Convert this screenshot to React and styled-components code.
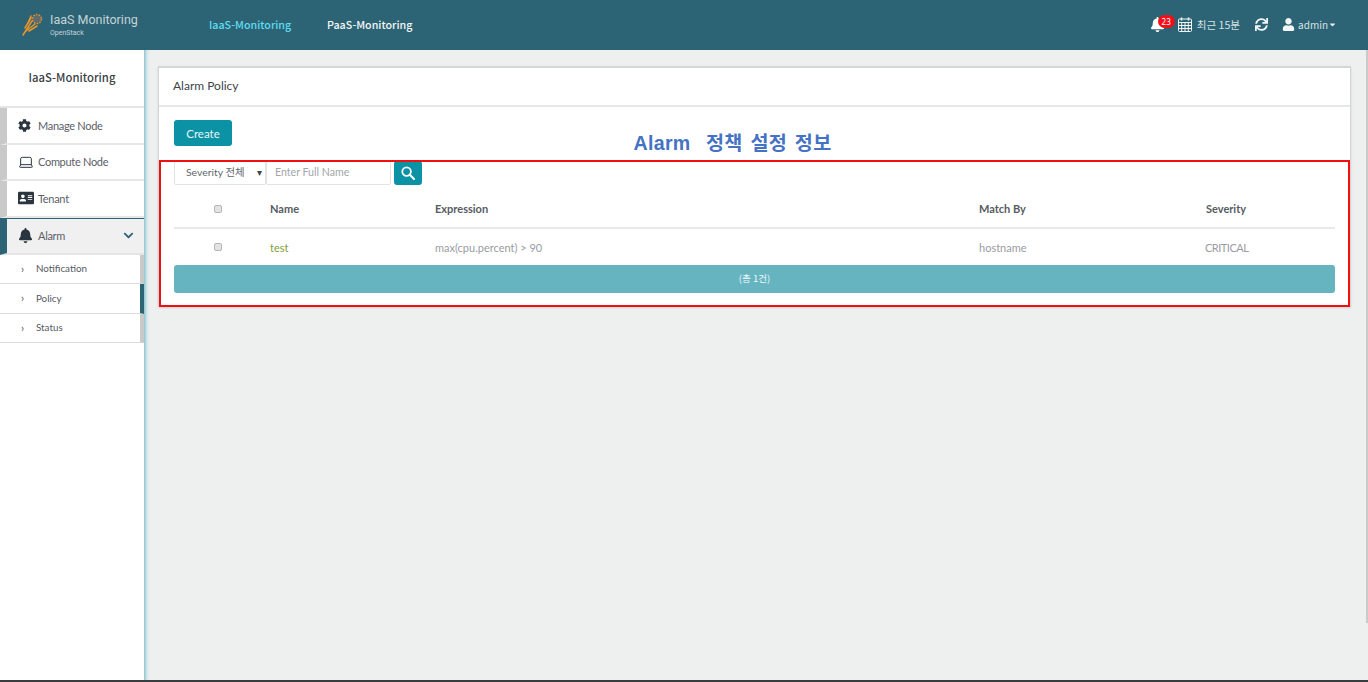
import React from "react";
import styled, { createGlobalStyle } from "styled-components";
import { FaCog, FaBell, FaChevronDown, FaAddressCard, FaSync, FaUser, FaCaretDown } from "react-icons/fa";
import { Laptop } from "lucide-react";

const KR_FONT = `"Noto Sans CJK KR", "Noto Sans", sans-serif`;
const BODY_FONT = `Lato, "Noto Sans CJK KR", sans-serif`;
const TEAL = "#2c6476";
const BUTTON = "#0b92a5";

const GlobalStyle = createGlobalStyle`
    html, body {
        margin: 0;
        padding: 0;
        height: 100%;
        overflow: hidden;
        background: #eef0ef;
    }
    * {
        box-sizing: border-box;
    }
`;

const Page = styled.div`
    position: relative;
    height: 100vh;
    display: flex;
    flex-flow: column;
    font-family: ${BODY_FONT};
`;

const Header = styled.header`
    height: 50px;
    flex: none;
    background: ${TEAL};
    display: flex;
    align-items: center;
    padding: 0 31px 2px 22px;
`;

const Brand = styled.div`
    width: 187px;
    display: flex;
    align-items: center;
    gap: 4px;
`;

const BrandText = styled.div`
    display: flex;
    flex-flow: column;
    color: #c5d3d7;
    font-family: Roboto, sans-serif;
    font-size: 12.5px;
    line-height: 15px;
    margin-top: 2px;
    small {
        font-size: 7px;
        line-height: 9px;
        margin-top: 2px;
    }
`;

const TopLink = styled.a`
    font-family: ${KR_FONT};
    font-size: 10.7px;
    font-weight: 500;
    color: ${(p) => (p.$active ? "#5fdcf0" : "#f4f7f7")};
    width: ${(p) => p.$width}px;
`;

const HeaderRight = styled.div`
    margin-left: auto;
    display: flex;
    align-items: center;
    color: #e6eef0;
    font-size: 12px;
`;

const BellWrap = styled.span`
    position: relative;
    display: inline-flex;
    width: 28px;
    font-size: 15px;
    color: #fff;
`;

const Badge = styled.span`
    position: absolute;
    left: 8px;
    top: -2px;
    width: 17px;
    height: 13px;
    border-radius: 7px;
    background: #f0101a;
    color: #fff;
    font-size: 8px;
    line-height: 13px;
    text-align: center;
    font-family: "Noto Sans", sans-serif;
`;

const Range = styled.span`
    font-family: ${KR_FONT};
    font-size: 10.6px;
    margin-left: 5px;
    margin-right: 15px;
    color: #d7e2e5;
`;

const Gap = styled.span`
    width: 14px;
`;

const UserName = styled.span`
    font-family: ${KR_FONT};
    font-size: 10px;
    margin-left: 3px;
    color: #d7e2e5;
`;

const Main = styled.div`
    flex: 1;
    display: flex;
    min-height: 0;
`;

const Sidebar = styled.aside`
    width: 150px;
    flex: none;
    padding-right: 6px;
    background: linear-gradient(90deg, #fff 144px, #8fc4d2 144px, #d5e7ea 147px, #eef0ef 150px);
`;

const SideTitle = styled.div`
    height: 58px;
    padding-bottom: 2px;
    display: flex;
    align-items: center;
    justify-content: center;
    font-family: ${KR_FONT};
    font-size: 11.3px;
    font-weight: 500;
    color: #3b4246;
    border-bottom: 2px solid #e3e5e6;
`;

const SideItem = styled.div`
    height: ${(p) => (p.$active ? 37 : 36.5)}px;
    display: flex;
    align-items: center;
    padding-left: 11px;
    border-left: 7px solid ${(p) => (p.$active ? TEAL : "#c9c9c9")};
    border-bottom: 2px solid ${(p) => (p.$active ? "#e3e5e6" : "#e6e8e8")};
    background: ${(p) => (p.$active ? "#f0f0f0" : "#fff")};
    color: #5a6068;
    font-size: 11px;
    letter-spacing: -0.3px;
    ${(p) => p.$active && `border-top: 1px solid ${TEAL};`}
`;

const SideIcon = styled.span`
    width: 20px;
    display: inline-flex;
    color: #2b3540;
    font-size: ${(p) => p.$size || 13}px;
`;

const Chevron = styled.span`
    margin-left: auto;
    margin-right: 10px;
    display: inline-flex;
    color: ${TEAL};
    font-size: 11px;
`;

const SubItem = styled.div`
    height: 29.5px;
    display: flex;
    align-items: center;
    padding: 0 0 1px 21px;
    font-size: 9.8px;
    color: #545a62;
    background: #fff;
    border-bottom: 1px solid #d9dbdc;
    border-right: 4px solid ${(p) => (p.$active ? TEAL : "#c9c9c9")};
    &::before {
        content: "›";
        width: 15px;
        font-size: 11px;
        color: #555;
    }
`;

const Content = styled.main`
    flex: 1;
    padding: 16px 17px 0 8px;
`;

const Panel = styled.section`
    position: relative;
    height: 241px;
    background: #fff;
    border: 1px solid #d4d6d6;
    border-top-width: 2px;
    box-shadow: 0 1px 2px rgba(0, 0, 0, 0.12);
`;

const PanelHead = styled.div`
    height: 39px;
    display: flex;
    align-items: center;
    padding: 0 0 2px 14px;
    font-size: 12px;
    color: #3d4448;
    border-bottom: 2px solid #e6e8e8;
`;

const PanelBody = styled.div`
    padding: 13px 15px 0 15px;
`;

const CreateButton = styled.button`
    display: block;
    width: 58px;
    height: 26px;
    padding: 0;
    border: 0;
    border-radius: 3px;
    background: ${BUTTON};
    color: #e9f6f8;
    font-family: ${BODY_FONT};
    font-size: 11.5px;
`;

const Heading = styled.h2`
    position: absolute;
    left: 0;
    right: 0;
    top: 63px;
    margin: 0;
    padding-right: 44px;
    text-align: center;
    font-family: "Liberation Sans", "Noto Sans CJK KR", sans-serif;
    font-size: 19.6px;
    line-height: 24px;
    font-weight: 700;
    word-spacing: 2px;
    letter-spacing: 0.3px;
    color: #4472c4;
    white-space: pre;
`;

const Filters = styled.div`
    margin-top: 15px;
    display: flex;
    align-items: center;
    height: 24px;
`;

const SelectBox = styled.div`
    position: relative;
    width: 92px;
    height: 24px;
    padding-left: 11px;
    border: 1px solid #e2e4e4;
    border-radius: 2px;
    font-size: 10.4px;
    line-height: 21px;
    color: #63686d;
    &::after {
        content: "▾";
        position: absolute;
        right: 3px;
        top: 0;
        font-size: 10px;
        color: #444;
    }
`;

const FullName = styled.input`
    width: 125px;
    height: 24px;
    padding: 0 0 2px 8px;
    border: 1px solid #e2e4e4;
    border-radius: 2px;
    outline: none;
    font-family: ${BODY_FONT};
    font-size: 10.6px;
    &::placeholder {
        color: #a3a6a9;
        opacity: 1;
    }
`;

const SearchButton = styled.button`
    width: 28px;
    height: 24px;
    margin-left: 3px;
    padding: 0;
    border: 0;
    border-radius: 3px;
    background: ${BUTTON};
    color: #fff;
    display: flex;
    align-items: center;
    justify-content: center;
`;

const Row = styled.div`
    display: grid;
    grid-template-columns: 96px 165px 544px 227px 1fr;
    align-items: center;
    height: ${(p) => (p.$head ? 38 : 36)}px;
    ${(p) => p.$head && "margin-top: 6px; padding-bottom: 1px; border-bottom: 2px solid #e8eaea;"}
    font-size: 11px;
    font-weight: ${(p) => (p.$head ? 700 : 400)};
    color: ${(p) => (p.$head ? "#565c62" : "#9a9ca3")};
`;

const CheckCell = styled.span`
    padding-left: 40px;
    display: flex;
`;

const Check = styled.span`
    width: 8px;
    height: 8px;
    border: 1px solid #b4b5b7;
    border-radius: 2px;
    background: #e2e3e5;
`;

const TestLink = styled.span`
    color: #7fa03c;
`;

const SeverityText = styled.span`
    margin-left: -1px;
    letter-spacing: -0.5px;
`;

const TotalBar = styled.div`
    height: 28px;
    border-radius: 3px;
    background: #67b4c1;
    color: #eef8fa;
    font-family: ${KR_FONT};
    font-size: 9.5px;
    line-height: 27px;
    text-align: center;
`;

const Annotation = styled.div`
    position: absolute;
    left: 0;
    right: 0;
    top: 92px;
    height: 147px;
    border: 2px solid #f01010;
    pointer-events: none;
`;

const BottomLine = styled.div`
    height: 2px;
    flex: none;
    background: #3a3d40;
`;

const ScrollStrip = styled.div`
    position: absolute;
    right: 0;
    top: 50px;
    width: 2px;
    height: 573px;
    background: #c9cbcb;
`;

// comet logo next to the brand name
function Logo() {
    return (
        <svg width="24" height="24" viewBox="0 0 24 24">
            <g stroke="#e8952c" strokeWidth="1.5" strokeLinecap="round">
                <line x1="1" y1="23" x2="10" y2="9" />
                <line x1="4" y1="19" x2="13" y2="12" />
                <line x1="3" y1="16" x2="9" y2="6" />
                <line x1="7" y1="19" x2="15" y2="14" />
                <line x1="6" y1="11" x2="9" y2="4" />
            </g>
            <circle cx="15" cy="7" r="4.5" fill="#5f6b6c" stroke="#e8952c" strokeWidth="1.4" strokeDasharray="1.6 1.2" />
        </svg>
    );
}

function CalendarIcon() {
    return (
        <svg width="14" height="15" viewBox="0 0 14 15" fill="none" stroke="#eef3f4" strokeWidth="1">
            <rect x="0.5" y="2" width="13" height="12.5" rx="1" />
            <path d="M0.5 5.5H13.5M0.5 8.5H13.5M0.5 11.5H13.5M3.7 5.5V14.5M7 5.5V14.5M10.3 5.5V14.5" />
            <path d="M3.5 0.5V3.5M10.5 0.5V3.5" strokeWidth="1.6" />
        </svg>
    );
}

function SearchIcon() {
    return (
        <svg width="14" height="14" viewBox="0 0 14 14" fill="none" stroke="#fff" strokeWidth="1.8">
            <circle cx="5.6" cy="5.6" r="4.3" />
            <path d="M8.8 8.8L13 13" strokeLinecap="round" strokeWidth="2" />
        </svg>
    );
}

const columns = ["Name", "Expression", "Match By", "Severity"];

function App() {
    return (
        <Page>
            <GlobalStyle />
            <Header>
                <Brand>
                    <Logo />
                    <BrandText>
                        IaaS Monitoring
                        <small>OpenStack</small>
                    </BrandText>
                </Brand>
                <TopLink $active $width={118}>IaaS-Monitoring</TopLink>
                <TopLink $width={100}>PaaS-Monitoring</TopLink>
                <HeaderRight>
                    <BellWrap>
                        <FaBell />
                        <Badge>23</Badge>
                    </BellWrap>
                    <CalendarIcon />
                    <Range>최근 15분</Range>
                    <FaSync size={13} color="#f2f6f7" />
                    <Gap />
                    <FaUser size={13} color="#f2f6f7" />
                    <UserName>admin</UserName>
                    <FaCaretDown size={9} />
                </HeaderRight>
            </Header>
            <Main>
                <Sidebar>
                    <SideTitle>IaaS-Monitoring</SideTitle>
                    <SideItem>
                        <SideIcon><FaCog /></SideIcon>
                        Manage Node
                    </SideItem>
                    <SideItem>
                        <SideIcon><Laptop size={16} strokeWidth={1.5} /></SideIcon>
                        Compute Node
                    </SideItem>
                    <SideItem>
                        <SideIcon $size={16}><FaAddressCard /></SideIcon>
                        Tenant
                    </SideItem>
                    <SideItem $active>
                        <SideIcon $size={15}><FaBell /></SideIcon>
                        Alarm
                        <Chevron><FaChevronDown /></Chevron>
                    </SideItem>
                    <SubItem>Notification</SubItem>
                    <SubItem $active>Policy</SubItem>
                    <SubItem>Status</SubItem>
                </Sidebar>
                <Content>
                    <Panel>
                        <PanelHead>Alarm Policy</PanelHead>
                        <Heading>{"Alarm  정책 설정 정보"}</Heading>
                        <PanelBody>
                            <CreateButton>Create</CreateButton>
                            <Filters>
                                <SelectBox>Severity 전체</SelectBox>
                                <FullName placeholder="Enter Full Name" />
                                <SearchButton><SearchIcon /></SearchButton>
                            </Filters>
                            <Row $head>
                                <CheckCell><Check /></CheckCell>
                                {columns.map((c) => <span key={c}>{c}</span>)}
                            </Row>
                            <Row>
                                <CheckCell><Check /></CheckCell>
                                <TestLink>test</TestLink>
                                <span>max(cpu.percent) &gt; 90</span>
                                <span>hostname</span>
                                <SeverityText>CRITICAL</SeverityText>
                            </Row>
                            <TotalBar>(총 1건)</TotalBar>
                        </PanelBody>
                        <Annotation />
                    </Panel>
                </Content>
            </Main>
            <BottomLine />
            <ScrollStrip />
        </Page>
    );
}

export default App;
